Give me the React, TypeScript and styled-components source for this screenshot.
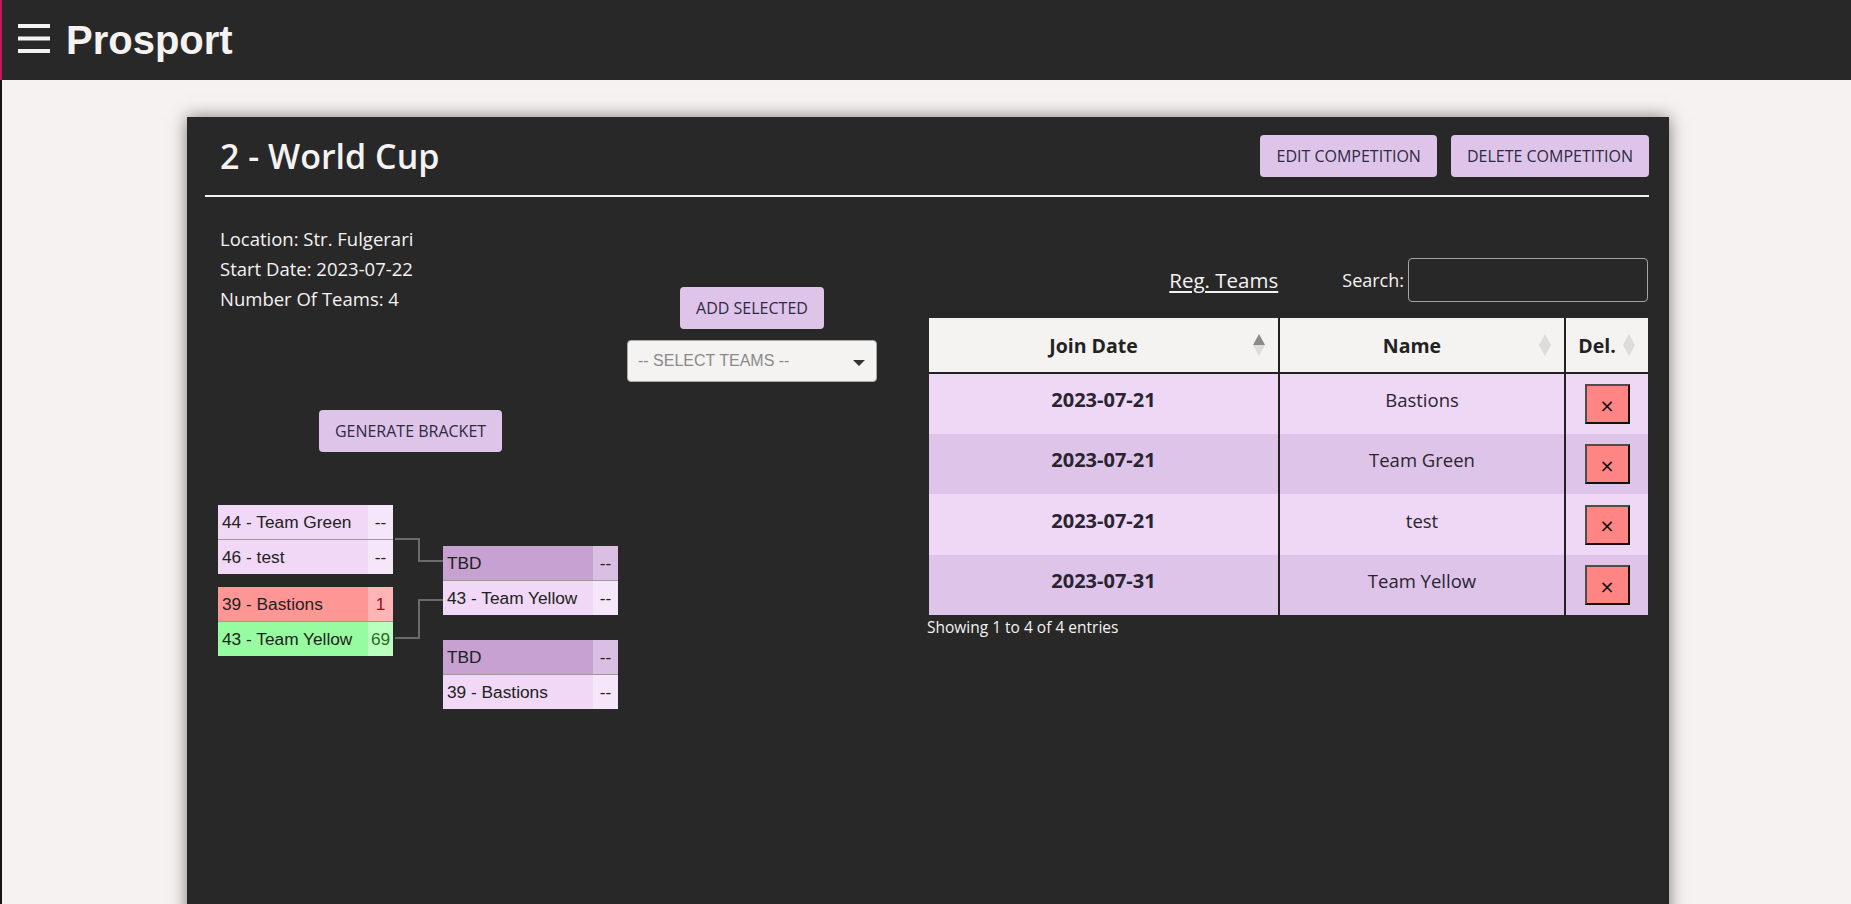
import React from "react";
import styled, { createGlobalStyle } from "styled-components";

const GlobalStyle = createGlobalStyle`
  html, body { margin: 0; padding: 0; background: #f6f2f1; }
  body { font-family: "Open Sans", "Noto Sans", sans-serif; overflow: hidden; color: #f5f2f2; }
  * { box-sizing: border-box; }
`;

const Page = styled.div`
  min-height: 904px;
  border-left: 2px solid #151515;
`;

const TopBar = styled.header`
  height: 80px;
  background: #282828;
  display: flex;
  align-items: center;
  gap: 16px;
  padding-left: 16px;
  margin-left: -2px;
  border-left: 2px solid #c2185b;
`;

const MenuIcon = styled.svg`
  width: 32px;
  height: 29px;
  margin-bottom: 3px;
  flex: none;
`;

const Brand = styled.h1`
  margin: 0;
  font-family: "Liberation Sans", Arial, sans-serif;
  font-weight: 700;
  font-size: 40px;
  line-height: 1;
  color: #f5f2f2;
`;

const Main = styled.main`
  padding: 37px 0 0 3px;
`;

const Card = styled.section`
  width: 1482px;
  margin: 0 auto;
  min-height: 820px;
  background: #282828;
  box-shadow: 0 0 16px rgba(0, 0, 0, 0.5);
  padding: 0 20px 0 18px;
`;

const CardHeader = styled.div`
  display: flex;
  align-items: center;
  justify-content: space-between;
  height: 78px;
  padding: 0 0 1px 15px;
`;

const Title = styled.h2`
  margin: 2px 0 0;
  font-size: 34px;
  font-weight: 600;
  line-height: 1.2;
  color: #f5f2f2;
`;

const HeaderActions = styled.div`
  display: flex;
  gap: 14px;
`;

const PurpleButton = styled.button`
  height: 42px;
  padding: 0 16px;
  border: none;
  border-radius: 4px;
  background: #dfc4ea;
  color: #2d2b3f;
  font-family: "Open Sans", "Noto Sans", sans-serif;
  font-size: 16px;
  font-weight: 400;
  white-space: nowrap;
  cursor: pointer;
`;

const Divider = styled.hr`
  margin: 0;
  border: none;
  height: 2px;
  background: #f5f2f2;
`;

const Body = styled.div`
  display: grid;
  grid-template-columns: 422px 250px 1fr;
  align-items: start;
`;

const LeftCol = styled.div`
  display: flex;
  flex-direction: column;
  padding: 27px 26px 0 15px;
`;

const InfoLine = styled.div`
  font-size: 18.5px;
  line-height: 30px;
  color: #f5f2f2;
`;

const GenerateButton = styled(PurpleButton)`
  align-self: center;
  margin-top: 96px;
`;

const MiddleCol = styled.div`
  display: flex;
  flex-direction: column;
  align-items: center;
  gap: 11px;
  padding-top: 90px;
`;

const SelectBox = styled.div`
  width: 250px;
  height: 42px;
  background: #f5f2f2;
  border: 1px solid #a9a9a9;
  border-radius: 4px;
  display: flex;
  align-items: center;
  justify-content: space-between;
  padding: 0 11px 0 10px;
`;

const Placeholder = styled.span`
  font-family: "Liberation Sans", Arial, sans-serif;
  font-size: 16px;
  color: #8a8a8a;
`;

const Caret = styled.svg`
  width: 12px;
  height: 6px;
  margin-top: 4px;
`;

const RightCol = styled.div`
  padding: 61px 1px 0 52px;
`;

const Toolbar = styled.div`
  display: flex;
  justify-content: flex-end;
  align-items: center;
  height: 44px;
`;

const RegLink = styled.a`
  font-size: 20.5px;
  color: #f5f2f2;
  text-decoration: underline;
  text-underline-offset: 3px;
  margin-right: 64px;
  cursor: pointer;
`;

const SearchLabel = styled.label`
  display: flex;
  align-items: center;
  gap: 4px;
  font-size: 18px;
  color: #f5f2f2;
`;

const SearchInput = styled.input`
  width: 240px;
  height: 44px;
  background: transparent;
  border: 1px solid #a4a4a4;
  border-radius: 4px;
  color: #f5f2f2;
  font-size: 16px;
  padding: 0 8px;
`;

const Table = styled.table`
  width: 719px;
  margin-top: 16px;
  border-collapse: collapse;
  table-layout: fixed;
`;

const HeadCell = styled.th<{ $last?: boolean }>`
  position: relative;
  height: 55px;
  background: #f5f2f2;
  color: #222;
  font-size: 19.5px;
  font-weight: 700;
  text-align: center;
  padding: 0 28px 0 8px;
  border-bottom: 2px solid #222;
  border-right: ${(p) => (p.$last ? "none" : "2px solid #222")};
`;

const SortIcon = styled.svg`
  position: absolute;
  right: 13px;
  top: 50%;
  transform: translateY(-50%);
  width: 12px;
  height: 22px;
`;

const Row = styled.tr<{ $odd?: boolean }>`
  background: ${(p) => (p.$odd ? "#efd7f6" : "#ddc4e8")};
  height: ${(p) => (p.$odd ? 61 : 60)}px;
`;

const Cell = styled.td<{ $bold?: boolean; $last?: boolean }>`
  text-align: center;
  vertical-align: middle;
  color: #2a2430;
  font-size: ${(p) => (p.$bold ? "20px" : "18.5px")};
  font-weight: ${(p) => (p.$bold ? 700 : 400)};
  border-right: ${(p) => (p.$last ? "none" : "2px solid #222")};
  padding: 0 0 ${(p) => (p.$last ? 0 : 9)}px;
`;

const DeleteButton = styled.button`
  width: 45px;
  height: 40px;
  background: #ff8585;
  border-style: solid;
  border-width: 2px;
  border-color: #4d4d4d #111 #111 #4d4d4d;
  color: #111;
  font-family: "DejaVu Sans", "Open Sans", sans-serif;
  font-size: 18px;
  line-height: 1;
  padding: 3px 0 0;
  cursor: pointer;
`;

const TableInfo = styled.div`
  font-size: 15.5px;
  color: #f5f2f2;
  margin: 1px 0 0 -2px;
`;

/* Bracket */
const Bracket = styled.div`
  position: relative;
  display: flex;
  gap: 50px;
  margin: 53px 0 0 -2px;
`;

const Round = styled.div<{ $gap: number; $offset: number }>`
  display: flex;
  flex-direction: column;
  gap: ${(p) => p.$gap}px;
  padding-top: ${(p) => p.$offset}px;
`;

const Match = styled.div`
  width: 175px;
  display: flex;
  flex-direction: column;
`;

const slotColors = {
  normal: { bg: "#f0d8f6", score: "#f6e6f9", scoreText: "#222" },
  tbd: { bg: "#c6a1d1", score: "#dbbfe2", scoreText: "#222" },
  loser: { bg: "#ff9696", score: "#ffb5b5", scoreText: "#9a1010" },
  winner: { bg: "#97fb9f", score: "#b9ffbd", scoreText: "#2f6b1f" },
};

type SlotKind = keyof typeof slotColors;

const Slot = styled.div<{ $second?: boolean }>`
  display: flex;
  height: ${(p) => (p.$second ? 35 : 34)}px;
  border-top: ${(p) => (p.$second ? "1px solid #9a9a9a" : "none")};
  font-family: "Liberation Sans", Arial, sans-serif;
  font-size: 17.3px;
  color: #222;
`;

const SlotName = styled.div<{ $kind: SlotKind }>`
  flex: 1;
  display: flex;
  align-items: center;
  padding-left: 4px;
  background: ${(p) => slotColors[p.$kind].bg};
  white-space: nowrap;
`;

const SlotScore = styled.div<{ $kind: SlotKind }>`
  width: 25px;
  display: flex;
  align-items: center;
  justify-content: center;
  background: ${(p) => slotColors[p.$kind].score};
  color: ${(p) => slotColors[p.$kind].scoreText};
`;

const Connectors = styled.svg`
  position: absolute;
  left: 0;
  top: 0;
  width: 100%;
  height: 100%;
  pointer-events: none;
  overflow: visible;
`;

type SlotData = { name: string; score: string; kind: SlotKind };

const MatchBox = ({ slots }: { slots: SlotData[] }) => (
  <Match>
    {slots.map((s, i) => (
      <Slot key={i} $second={i === 1}>
        <SlotName $kind={s.kind}>{s.name}</SlotName>
        <SlotScore $kind={s.kind}>{s.score}</SlotScore>
      </Slot>
    ))}
  </Match>
);

const Sort = ({ active }: { active?: boolean }) => (
  <SortIcon viewBox="0 0 12 22">
    <polygon points="0,11 6,0 12,11" fill={active ? "#8a8a8a" : "#dcdcdc"} />
    <polygon points="0,11 12,11 6,22" fill="#dcdcdc" />
  </SortIcon>
);

const rows = [
  { date: "2023-07-21", name: "Bastions" },
  { date: "2023-07-21", name: "Team Green" },
  { date: "2023-07-21", name: "test" },
  { date: "2023-07-31", name: "Team Yellow" },
];

export default function App() {
  return (
    <>
      <GlobalStyle />
      <Page>
        <TopBar>
          <MenuIcon viewBox="0 0 32 29">
            <rect x="0" y="0" width="32" height="4" fill="#f5f2f2" />
            <rect x="0" y="12.5" width="32" height="4" fill="#f5f2f2" />
            <rect x="0" y="25" width="32" height="4" fill="#f5f2f2" />
          </MenuIcon>
          <Brand>Prosport</Brand>
        </TopBar>
        <Main>
          <Card>
            <CardHeader>
              <Title>2 - World Cup</Title>
              <HeaderActions>
                <PurpleButton>EDIT COMPETITION</PurpleButton>
                <PurpleButton>DELETE COMPETITION</PurpleButton>
              </HeaderActions>
            </CardHeader>
            <Divider />
            <Body>
              <LeftCol>
                <InfoLine>Location: Str. Fulgerari</InfoLine>
                <InfoLine>Start Date: 2023-07-22</InfoLine>
                <InfoLine>Number Of Teams: 4</InfoLine>
                <GenerateButton>GENERATE BRACKET</GenerateButton>
                <Bracket>
                  <Round $gap={13} $offset={0}>
                    <MatchBox
                      slots={[
                        { name: "44 - Team Green", score: "--", kind: "normal" },
                        { name: "46 - test", score: "--", kind: "normal" },
                      ]}
                    />
                    <MatchBox
                      slots={[
                        { name: "39 - Bastions", score: "1", kind: "loser" },
                        { name: "43 - Team Yellow", score: "69", kind: "winner" },
                      ]}
                    />
                  </Round>
                  <Round $gap={25} $offset={41}>
                    <MatchBox
                      slots={[
                        { name: "TBD", score: "--", kind: "tbd" },
                        { name: "43 - Team Yellow", score: "--", kind: "normal" },
                      ]}
                    />
                    <MatchBox
                      slots={[
                        { name: "TBD", score: "--", kind: "tbd" },
                        { name: "39 - Bastions", score: "--", kind: "normal" },
                      ]}
                    />
                  </Round>
                  <Connectors>
                    <path d="M177 34 H201 V56 H225" fill="none" stroke="#6b6b6b" strokeWidth="2" />
                    <path d="M177 133 H201 V95 H225" fill="none" stroke="#6b6b6b" strokeWidth="2" />
                  </Connectors>
                </Bracket>
              </LeftCol>
              <MiddleCol>
                <PurpleButton>ADD SELECTED</PurpleButton>
                <SelectBox>
                  <Placeholder>-- SELECT TEAMS --</Placeholder>
                  <Caret viewBox="0 0 12 6">
                    <polygon points="0,0 12,0 6,6" fill="#333" />
                  </Caret>
                </SelectBox>
              </MiddleCol>
              <RightCol>
                <Toolbar>
                  <RegLink>Reg. Teams</RegLink>
                  <SearchLabel>
                    Search:
                    <SearchInput type="search" />
                  </SearchLabel>
                </Toolbar>
                <Table>
                  <colgroup>
                    <col style={{ width: 350 }} />
                    <col style={{ width: 286 }} />
                    <col style={{ width: 83 }} />
                  </colgroup>
                  <thead>
                    <tr>
                      <HeadCell>
                        Join Date
                        <Sort active />
                      </HeadCell>
                      <HeadCell>
                        Name
                        <Sort />
                      </HeadCell>
                      <HeadCell $last>
                        Del.
                        <Sort />
                      </HeadCell>
                    </tr>
                  </thead>
                  <tbody>
                    {rows.map((r, i) => (
                      <Row key={i} $odd={i % 2 === 0}>
                        <Cell $bold>{r.date}</Cell>
                        <Cell>{r.name}</Cell>
                        <Cell $last>
                          <DeleteButton>×</DeleteButton>
                        </Cell>
                      </Row>
                    ))}
                  </tbody>
                </Table>
                <TableInfo>Showing 1 to 4 of 4 entries</TableInfo>
              </RightCol>
            </Body>
          </Card>
        </Main>
      </Page>
    </>
  );
}
